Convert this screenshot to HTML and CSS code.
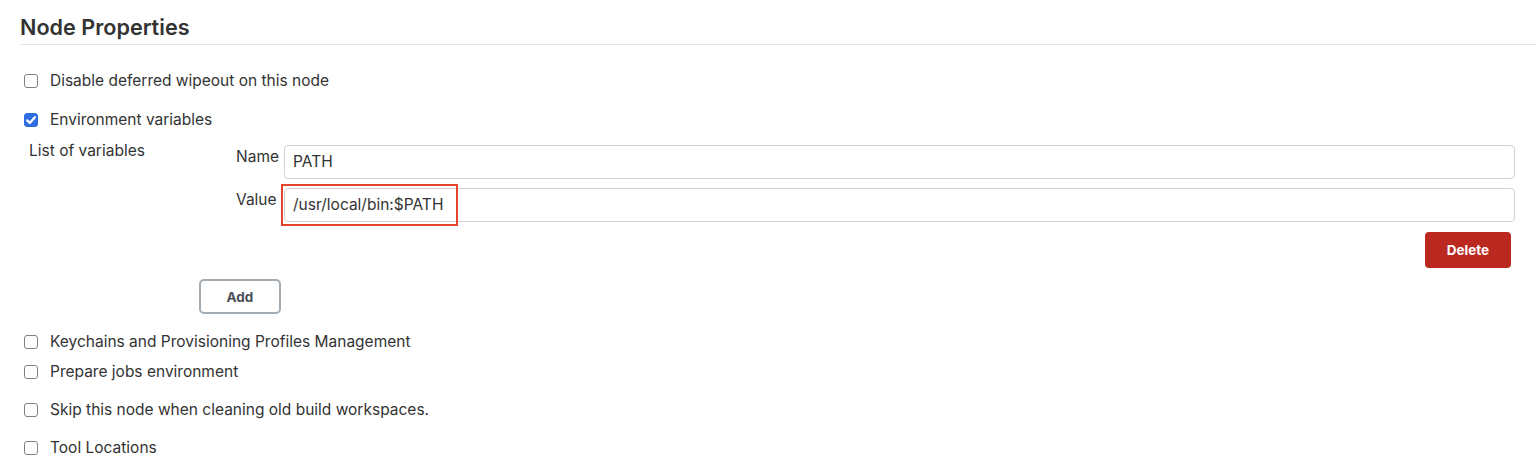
FILE: index.html
```html
<!DOCTYPE html>
<html lang="en">
<head>
<meta charset="utf-8">
<title>Node Properties</title>
<link rel="stylesheet" href="styles.css">
</head>
<body>
<section class="panel">
  <h2 class="title">Node Properties</h2>

  <label class="check row-1"><span class="box"></span><span>Disable deferred wipeout on this node</span></label>
  <label class="check row-2"><span class="box checked"><svg viewBox="0 0 14 14" width="14" height="14"><path d="M3.2 7.4 L5.8 9.9 L10.9 4.2" fill="none" stroke="#fff" stroke-width="2.3" stroke-linecap="round" stroke-linejoin="round"/></svg></span><span>Environment variables</span></label>

  <div class="vars">
    <div class="vars-label">List of variables</div>
    <div class="vars-body">
      <div class="entry">
        <div class="field">
          <span class="field-label">Name</span>
          <div class="input">PATH</div>
        </div>
        <div class="field field-value">
          <span class="field-label">Value</span>
          <div class="input">/usr/local/bin:$PATH</div>
          <div class="highlight"></div>
        </div>
        <div class="entry-actions">
          <button class="btn btn-danger">Delete</button>
        </div>
      </div>
      <button class="btn btn-add">Add</button>
    </div>
  </div>

  <label class="check row-3"><span class="box"></span><span>Keychains and Provisioning Profiles Management</span></label>
  <label class="check row-4"><span class="box"></span><span>Prepare jobs environment</span></label>
  <label class="check row-5"><span class="box"></span><span>Skip this node when cleaning old build workspaces.</span></label>
  <label class="check row-6"><span class="box"></span><span>Tool Locations</span></label>
</section>
</body>
</html>
```

FILE: styles.css
```css
html, body {
  margin: 0;
  padding: 0;
  background: #ffffff;
}

body {
  font-family: "Inter", "Noto Sans", "Liberation Sans", sans-serif;
  font-size: 15.5px;
  color: #333333;
  height: 471px;
  overflow: hidden;
}

.panel {
  padding-left: 20px;
  display: flex;
  flex-direction: column;
}

.title {
  margin: 0;
  padding-top: 14px;
  padding-bottom: 4px;
  line-height: 26px;
  font-size: 21.6px;
  font-weight: 600;
  color: #333333;
  border-bottom: 1.5px solid #e4e4e4;
}

.check {
  display: flex;
  align-items: center;
  gap: 12px;
  height: 20px;
  line-height: 20px;
  padding-left: 4px;
}

.box {
  width: 14px;
  height: 14px;
  box-sizing: border-box;
  border: 1px solid #808080;
  border-radius: 3px;
  background: #fff;
  flex: none;
  display: flex;
}

.box.checked {
  background: #2f6ee0;
  border-color: #2f6ee0;
}

.box svg {
  margin: -1px;
}

.row-1 { margin-top: 26px; }
.row-2 { margin-top: 19px; }
.row-3 { margin-top: 18px; }
.row-4 { margin-top: 10px; }
.row-5 { margin-top: 18px; }
.row-6 { margin-top: 18px; }

.vars {
  margin-top: 11px;
  display: flex;
  padding-right: 21px;
}

.vars-label {
  width: 170px;
  padding-left: 9px;
  line-height: 20px;
  flex: none;
}

.vars-body {
  flex: 1;
  display: flex;
  flex-direction: column;
  align-items: flex-start;
  padding-top: 4px;
}

.entry {
  align-self: stretch;
  padding-left: 37px;
  display: flex;
  flex-direction: column;
}

.field {
  display: grid;
  grid-template-columns: 48px 1fr;
  position: relative;
}

.field-value {
  margin-top: 9px;
}

.field-label {
  padding-top: 2px;
  line-height: 20px;
}

.input {
  height: 34px;
  box-sizing: border-box;
  border: 1px solid #d2d2d2;
  border-radius: 4px;
  padding: 0 8px;
  line-height: 32px;
  color: #333333;
  background: #fff;
}

.highlight {
  position: absolute;
  left: 45px;
  top: -4px;
  width: 177px;
  height: 42px;
  box-sizing: border-box;
  border: 2px solid #e4442d;
  pointer-events: none;
}

.entry-actions {
  display: flex;
  justify-content: flex-end;
  padding-right: 4px;
  margin-top: 10px;
}

.btn {
  font-family: inherit;
  font-size: 13.5px;
  font-weight: 700;
  cursor: pointer;
}

.btn-danger {
  width: 86px;
  height: 36px;
  border: none;
  border-radius: 4px;
  background: #bb2820;
  color: #ffffff;
}

.btn-add {
  margin-top: 11px;
  width: 82px;
  height: 35px;
  border: 2px solid #a2acb4;
  border-radius: 5px;
  background: #ffffff;
  color: #4a4f56;
}
```
